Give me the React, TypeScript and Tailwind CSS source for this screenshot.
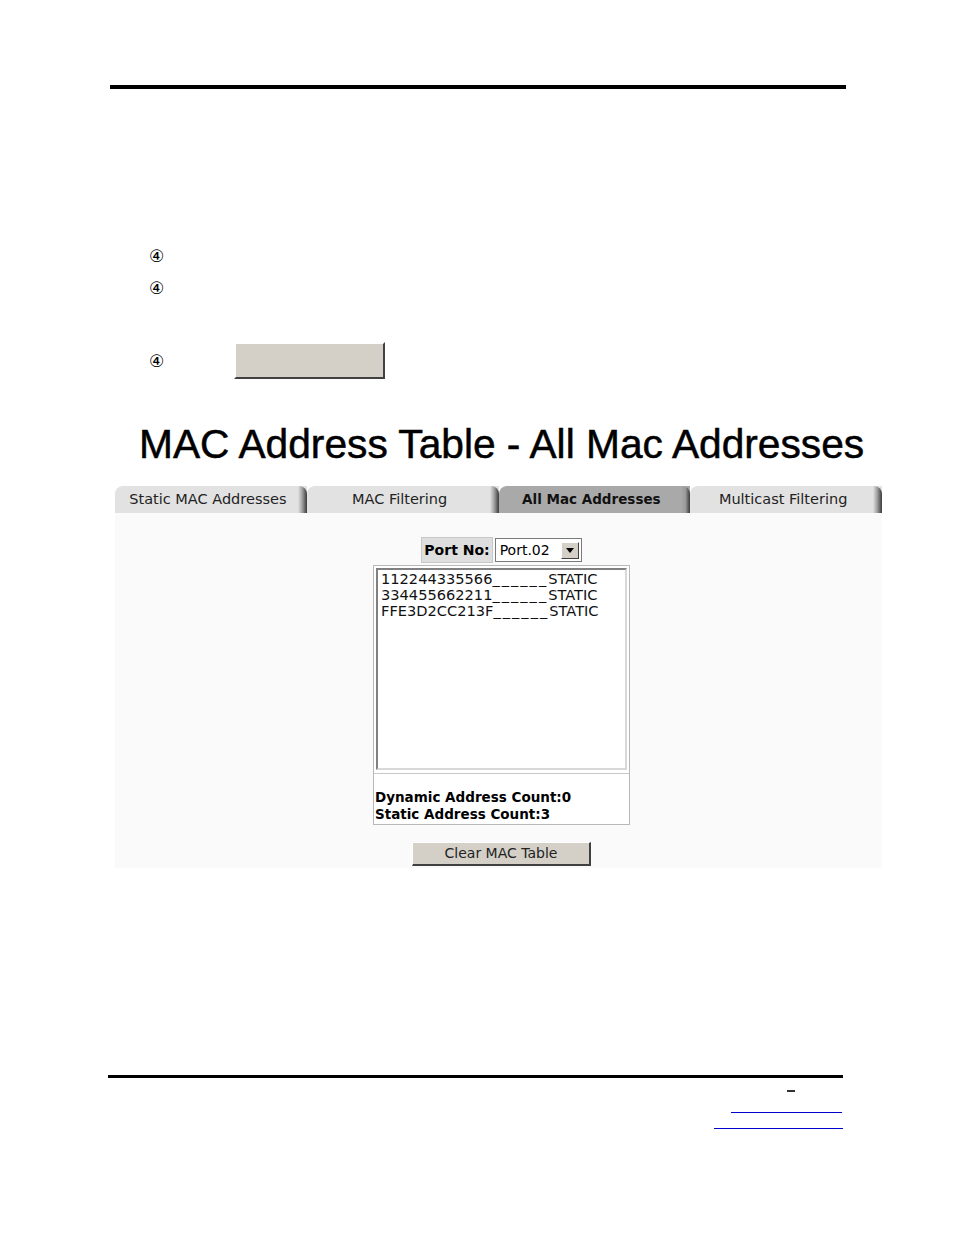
import React from 'react';

const tabs = [
  { label: 'Static MAC Addresses', active: false },
  { label: 'MAC Filtering', active: false },
  { label: 'All Mac Addresses', active: true },
  { label: 'Multicast Filtering', active: false },
];

const rows = [
  { mac: '112244335566', type: 'STATIC' },
  { mac: '334455662211', type: 'STATIC' },
  { mac: 'FFE3D2CC213F', type: 'STATIC' },
];

function Circled({ className = '' }: { className?: string }) {
  return (
    <div className={`h-[16px] text-[17px] leading-[16px] font-['DejaVu_Sans',sans-serif] text-black ${className}`}>④</div>
  );
}

export default function App() {
  return (
    <div className="w-[954px] h-[1235px] bg-white relative font-['Liberation_Sans',Arial,sans-serif] text-black">
      {/* header rule */}
      <div className="pt-[85px] pl-[110px]">
        <div className="w-[736px] h-[4px] bg-black" />
      </div>

      {/* steps */}
      <div className="pl-[149px] pt-[159px]">
        <Circled />
        <Circled className="mt-[16px]" />
        <div className="flex items-center mt-[46px]">
          <Circled />
          <div className="ml-[70px] w-[151px] h-[37px] bg-[#d4d0c8] border-t-2 border-l-2 border-t-white border-l-white border-r-2 border-b-2 border-r-[#404040] border-b-[#404040]" />
        </div>
      </div>

      {/* title */}
      <h1 className="mt-[42px] pl-[139px] text-[40.7px] leading-[46px] font-normal [-webkit-text-stroke:0.5px_black]">
        MAC Address Table - All Mac Addresses
      </h1>

      {/* tabs */}
      <div className="mt-[19px] ml-[115px] w-[767px] flex font-['DejaVu_Sans',Verdana,sans-serif]">
        {tabs.map((t) => (
          <div
            key={t.label}
            className={`relative flex-1 h-[27px] flex items-center justify-center rounded-tl-[8px] ${
              t.active ? 'bg-[#a9a9a9] font-bold text-[13.5px] text-[#111]' : 'bg-[#e2e2e2] text-[14.5px] text-[#222]'
            }`}
          >
            <span className="pr-[6px]">{t.label}</span>
            <span className="absolute right-0 top-0 w-[9px] h-[27px] rounded-tr-[8px] bg-gradient-to-r from-transparent via-[#9a9a9a] to-[#3c3c3c]" />
          </div>
        ))}
      </div>

      {/* content */}
      <div className="ml-[115px] w-[767px] h-[355px] bg-[#fafafa] flex flex-col items-center pt-[24px] pl-[6px] font-['DejaVu_Sans',Verdana,sans-serif]">
        <div className="flex items-stretch">
          <div className="h-[26px] px-[2px] flex items-center bg-[#dedede] border border-[#c8c8c8] text-[14px] font-bold">
            Port No:
          </div>
          <div className="ml-[2px] mt-[1px] h-[24px] w-[87px] flex items-center justify-between bg-white border border-[#7a7a7a] pl-[4px] pr-[2px] text-[14px]">
            <span>Port.02</span>
            <span className="w-[18px] h-[17px] bg-[#d4d0c8] border border-t-white border-l-white border-r-[#404040] border-b-[#404040] flex items-center justify-center">
              <svg width="8" height="5" viewBox="0 0 8 5">
                <path d="M0 0h8L4 5z" fill="#000" />
              </svg>
            </span>
          </div>
        </div>

        <div className="mt-[2px] w-[257px] h-[260px] bg-white border border-[#b8b8b8] flex flex-col">
          <div className="m-[2px] h-[202px] border-2 border-t-[#808080] border-l-[#808080] border-r-[#d8d8d8] border-b-[#d8d8d8] bg-white pl-[3px] pt-[1px] text-[14.6px] leading-[16px] text-[#111]">
            {rows.map((r) => (
              <div key={r.mac} className="whitespace-nowrap">
                {r.mac}
                <span className="tracking-[2px]">______</span>
                {r.type}
              </div>
            ))}
          </div>
          <div className="border-t border-[#c8c8c8] mt-[1px] pt-[15px] pl-[1px] text-[13.5px] leading-[16.5px] font-bold">
            <div>Dynamic Address Count:0</div>
            <div>Static Address Count:3</div>
          </div>
        </div>

        <div className="mt-[17px] w-[179px] h-[24px] bg-[#d4d0c8] border border-t-white border-l-white border-r-2 border-b-2 border-r-[#404040] border-b-[#404040] flex items-center justify-center text-[14px] text-[#222]">
          Clear MAC Table
        </div>
      </div>

      {/* footer */}
      <div className="absolute left-[108px] top-[1075px] w-[735px] h-[3px] bg-black" />
      <div className="absolute left-[787px] top-[1090px] w-[8px] h-[2px] bg-[#333]" />
      <div className="absolute left-[731px] top-[1112px] w-[111px] h-[1px] bg-[#0000cc]" />
      <div className="absolute left-[714px] top-[1128px] w-[129px] h-[1px] bg-[#0000cc]" />
    </div>
  );
}
